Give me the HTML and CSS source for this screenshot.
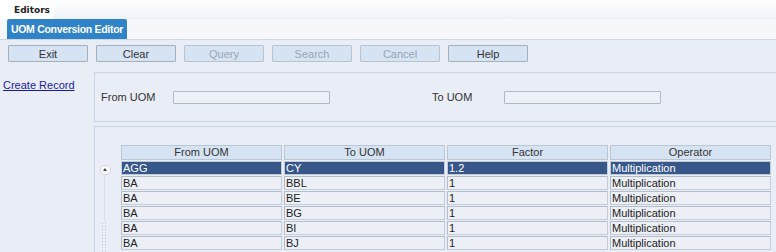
FILE: index.html
```html
<!DOCTYPE html>
<html lang="en">
<head>
    <meta charset="UTF-8">
    <title>UOM Conversion Editor</title>
    <link rel="stylesheet" href="styles.css">
</head>
<body>
    <div class="topbar">
        <div class="apptab">Editors</div>
    </div>
    <div class="tabrow">
        <div class="editortab">UOM Conversion Editor</div>
    </div>
    <div class="toolbar">
        <button>Exit</button>
        <button>Clear</button>
        <button class="disabled">Query</button>
        <button class="disabled">Search</button>
        <button class="disabled">Cancel</button>
        <button>Help</button>
    </div>
    <div class="main">
        <div class="side">
            <a href="#">Create Record</a>
        </div>
        <div class="content">
            <div class="panel form">
                <label class="lbl">From UOM</label>
                <span class="field"></span>
                <label class="lbl lbl-to">To UOM</label>
                <span class="field"></span>
            </div>
            <div class="panel results">
                <div class="scroller">
                    <span class="arrow"></span>
                    <span class="track"></span>
                    <span class="grip"></span>
                </div>
                <div class="grid">
                    <div class="th">From UOM</div>
                    <div class="th">To UOM</div>
                    <div class="th">Factor</div>
                    <div class="th">Operator</div>

                    <div class="td sel">AGG</div><div class="td sel">CY</div><div class="td sel">1.2</div><div class="td sel">Multiplication</div>
                    <div class="td">BA</div><div class="td">BBL</div><div class="td">1</div><div class="td">Multiplication</div>
                    <div class="td">BA</div><div class="td">BE</div><div class="td">1</div><div class="td">Multiplication</div>
                    <div class="td">BA</div><div class="td">BG</div><div class="td">1</div><div class="td">Multiplication</div>
                    <div class="td">BA</div><div class="td">BI</div><div class="td">1</div><div class="td">Multiplication</div>
                    <div class="td">BA</div><div class="td">BJ</div><div class="td">1</div><div class="td">Multiplication</div>
                </div>
            </div>
        </div>
    </div>
</body>
</html>
```

FILE: styles.css
```css
body {
    margin: 0;
    font-family: "Liberation Sans", Arial, sans-serif;
    font-size: 11px;
    color: #333;
    background-color: #e9eef6;
    overflow: hidden;
    height: 252px;
}

/* top tabs */
.topbar {
    height: 19px;
    background: linear-gradient(#ffffff, #eef2f8);
}

.apptab {
    width: 48px;
    height: 19px;
    padding-left: 14px;
    line-height: 20px;
    font-family: "DejaVu Sans", sans-serif;
    font-size: 9px;
    font-weight: bold;
    color: #222;
    background: linear-gradient(100deg, #fff 85%, transparent 86%);
}

.tabrow {
    height: 20px;
    padding-left: 7px;
    background-color: #f5f7fb;
    border-bottom: 1px solid #cdd6e2;
}

.editortab {
    display: inline-block;
    width: 120px;
    height: 20px;
    line-height: 20px;
    text-align: center;
    white-space: nowrap;
    color: #fff;
    font-size: 10.5px;
    font-weight: bold;
    letter-spacing: -0.3px;
    background-color: #2f84c9;
    border-radius: 2px 2px 0 0;
}

/* toolbar */
.toolbar {
    display: flex;
    gap: 8px;
    padding: 5px 8px 4px;
}

.toolbar button {
    width: 80px;
    height: 17px;
    padding: 0;
    font-family: "Liberation Sans", Arial, sans-serif;
    font-size: 11px;
    color: #333;
    background-color: #d5e3f3;
    border: 1px solid #a4afbd;
    border-radius: 1px;
}

.toolbar button.disabled {
    color: #9aa6b4;
    border-color: #b8c3d0;
}

/* main area */
.main {
    display: flex;
}

.side {
    width: 91px;
    padding-top: 13px;
    padding-left: 3px;
}

.side a {
    color: #1a1aa6;
    font-size: 11px;
}

.content {
    flex: 1;
    padding-top: 6px;
}

.panel {
    border: 1px solid #c9d5e4;
    border-right: none;
}

.form {
    height: 48px;
    display: flex;
    align-items: center;
    padding-left: 6px;
}

.lbl {
    width: 72px;
}

.lbl-to {
    width: 72px;
    margin-left: 102px;
}

.field {
    display: inline-block;
    width: 155px;
    height: 11px;
    border: 1px solid #b0bac6;
    border-radius: 1px;
    background-color: #edf1f7;
}

.results {
    margin-top: 4px;
    padding: 18px 0 0 4px;
    display: flex;
    height: 120px;
}

.scroller {
    width: 22px;
    padding-top: 20px;
    display: flex;
    flex-direction: column;
    align-items: flex-start;
}

.arrow {
    width: 9px;
    height: 8px;
    margin-left: 1px;
    border: 1px solid #d0d8e3;
    border-radius: 4px;
    background-color: #f7f9fc;
    position: relative;
}

.arrow::after {
    content: "";
    position: absolute;
    left: 2px;
    top: 2px;
    border-left: 2.5px solid transparent;
    border-right: 2.5px solid transparent;
    border-bottom: 3px solid #444;
}

.track {
    width: 1px;
    height: 47px;
    margin-left: 5px;
    background-color: #d8dfe8;
}

.grip {
    width: 6px;
    height: 40px;
    margin-left: 2px;
    background-image: radial-gradient(#b9c2cd 0.7px, transparent 0.8px);
    background-size: 3px 3px;
}

/* result grid */
.grid {
    display: grid;
    grid-template-columns: repeat(4, 161px);
    grid-auto-rows: 14px;
    grid-template-rows: 15px;
    column-gap: 2px;
    row-gap: 1px;
    align-content: start;
}

.th,
.td {
    box-sizing: border-box;
    padding: 0 1px;
    border: 1px solid #aab5c4;
    white-space: nowrap;
    overflow: hidden;
    line-height: 12px;
}

.th {
    text-align: center;
    line-height: 13px;
    background-color: #d5e3f3;
    border-color: #b9c6d6;
}

.td {
    color: #222;
    background-color: #eceff5;
    border-color: #b3bdca #c4ccd7 #c4ccd7 #b3bdca;
}

.td.sel {
    color: #fff;
    background-color: #37578a;
    border-color: #c2cad6;
}
```
